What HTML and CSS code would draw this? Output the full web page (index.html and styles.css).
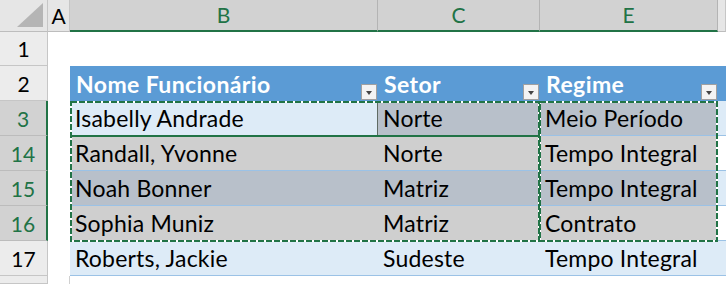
FILE: index.html
```html
<!DOCTYPE html>
<html>
<head>
<meta charset="utf-8">
<link rel="stylesheet" href="styles.css">
</head>
<body>
<div class="sheet">
  <div class="grid">
    <div class="corner"><svg class="tri" width="27" height="24" viewBox="0 0 27 24"><polygon points="26,0 26,24 0,24" fill="#b5b5b5"/></svg></div>
    <div class="ch">A</div>
    <div class="ch sel">B</div>
    <div class="ch sel">C</div>
    <div class="ch sel">E</div>
    <div class="ch"></div>

    <div class="rh">1</div>
    <div class="c"></div><div class="c"></div><div class="c"></div><div class="c"></div><div class="c"></div>

    <div class="rh">2</div>
    <div class="c"></div>
    <div class="c th">Nome Funcionário<span class="flt"></span></div>
    <div class="c th">Setor<span class="flt"></span></div>
    <div class="c th">Regime<span class="flt"></span></div>
    <div class="c th"></div>

    <div class="rh sel">3</div>
    <div class="c"></div>
    <div class="c td band active">Isabelly Andrade</div>
    <div class="c td bandsel">Norte</div>
    <div class="c td bandsel">Meio Período</div>
    <div class="c td band"></div>

    <div class="rh sel">14</div>
    <div class="c"></div>
    <div class="c td plainsel">Randall, Yvonne</div>
    <div class="c td plainsel">Norte</div>
    <div class="c td plainsel">Tempo Integral</div>
    <div class="c td"></div>

    <div class="rh sel">15</div>
    <div class="c"></div>
    <div class="c td bandsel">Noah Bonner</div>
    <div class="c td bandsel">Matriz</div>
    <div class="c td bandsel">Tempo Integral</div>
    <div class="c td band"></div>

    <div class="rh sel">16</div>
    <div class="c"></div>
    <div class="c td plainsel">Sophia Muniz</div>
    <div class="c td plainsel">Matriz</div>
    <div class="c td plainsel">Contrato</div>
    <div class="c td"></div>

    <div class="rh">17</div>
    <div class="c"></div>
    <div class="c td band">Roberts, Jackie</div>
    <div class="c td band">Sudeste</div>
    <div class="c td band">Tempo Integral</div>
    <div class="c td band"></div>

    <div class="rh"></div>
    <div class="c edge"></div><div class="c"></div><div class="c"></div><div class="c"></div><div class="c"></div>
  </div>
  <svg class="marquee" width="726" height="284" viewBox="0 0 726 284">
    <g fill="none" stroke-width="2">
      <rect x="71" y="102" width="468" height="34" stroke="#ffffff"/>
      <rect x="71" y="136" width="468" height="105" stroke="#ffffff"/>
      <rect x="540" y="102" width="177" height="139" stroke="#ffffff"/>
      <rect x="71" y="102" width="468" height="34" stroke="#217346" stroke-dasharray="6 2"/>
      <rect x="71" y="136" width="468" height="105" stroke="#217346" stroke-dasharray="6 2"/>
      <rect x="540" y="102" width="177" height="139" stroke="#217346" stroke-dasharray="6 2"/>
    </g>
  </svg>
</div>
</body>
</html>
```

FILE: styles.css
```css
* { box-sizing: border-box; }
html, body { margin: 0; padding: 0; background: #ffffff; }
body { width: 726px; height: 284px; overflow: hidden; font-family: Lato, "Liberation Sans", sans-serif; }

.sheet { position: relative; width: 726px; height: 284px; overflow: hidden; }

.grid {
  display: grid;
  grid-template-columns: 48px 22px 308px 162px 178px 1fr;
  grid-template-rows: 32px 34px 35px 35px 35px 35px 35px 35px 1fr;
  width: 726px;
  height: 284px;
}

.corner {
  background: #e6e6e6;
  border-right: 1px solid #c6c6c6;
  border-bottom: 1px solid #bdbdbd;
  display: flex;
  align-items: flex-start;
  justify-content: flex-end;
  padding: 3px 3px 0 0;
}

.ch {
  background: #e6e6e6;
  border-right: 1px solid #c6c6c6;
  border-bottom: 1px solid #bdbdbd;
  font-size: 21px;
  color: #000;
  display: flex;
  align-items: center;
  justify-content: center;
  padding-bottom: 1px;
}
.ch.sel {
  background: #d2d2d2;
  color: #217346;
  border-right-color: #b4b4b4;
  border-bottom: 2px solid #217346;
}

.rh {
  background: #ececec;
  border-right: 1px solid #c6c6c6;
  border-bottom: 1px solid #c6c6c6;
  font-size: 21px;
  color: #000;
  display: flex;
  align-items: center;
  justify-content: center;
}
.rh.sel {
  background: #d2d2d2;
  color: #217346;
  border-right: 2px solid #217346;
  border-bottom-color: #bcbcbc;
}

.c {
  position: relative;
  background: #ffffff;
  font-size: 23px;
  color: #000;
  display: flex;
  align-items: center;
  padding-left: 5px;
  white-space: nowrap;
}
.c.edge { border-right: 1px solid #d0d0d0; }

.th {
  background: #5b9bd5;
  color: #ffffff;
  font-weight: 700;
  padding-left: 6px;
  letter-spacing: 0.4px;
}
.td { border-bottom: 1px solid #9bc2e6; letter-spacing: 0.2px; }
.band { background: #ddebf7; }
.bandsel { background: #b8c0ca; }
.plainsel { background: #cfcfcf; }
.active { box-shadow: inset -1px 0 0 #5f6b64, inset 1px 0 0 #5f6b64; }

.flt {
  position: absolute;
  right: 1px;
  bottom: 1px;
  width: 16px;
  height: 16px;
  background: #f3f3f3;
  border: 1px solid #a0a0a0;
}
.flt::after {
  content: "";
  position: absolute;
  left: 4px;
  top: 6px;
  border-left: 3.5px solid transparent;
  border-right: 3.5px solid transparent;
  border-top: 4px solid #444444;
}

.marquee { position: absolute; left: 0; top: 0; pointer-events: none; }
```
